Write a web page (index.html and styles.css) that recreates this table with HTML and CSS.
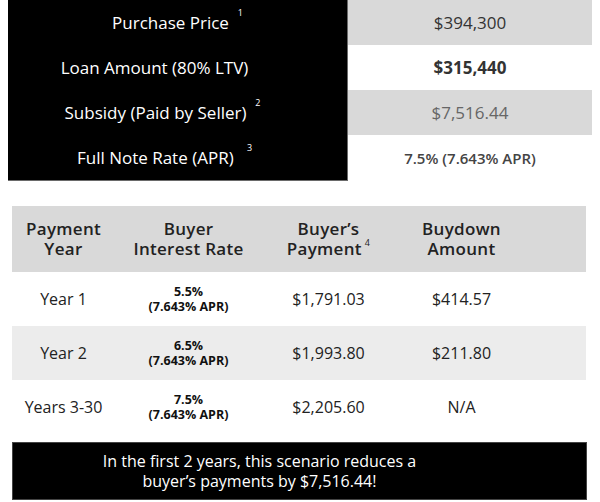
FILE: index.html
```html
<!DOCTYPE html>
<html>
<head>
<meta charset="utf-8">
<link rel="stylesheet" href="styles.css">
</head>
<body>
<div class="summary">
  <div class="label label--first"><span>Purchase Price &nbsp;<sup>1</sup></span></div>
  <div class="value value--gray">$394,300</div>
  <div class="label"><span>Loan Amount (80% LTV)</span></div>
  <div class="value value--bold">$315,440</div>
  <div class="label label--subsidy"><span>Subsidy (Paid by Seller) &nbsp;<sup>2</sup></span></div>
  <div class="value value--gray value--muted">$7,516.44</div>
  <div class="label label--last"><span>Full Note Rate (APR) &nbsp;&nbsp;<sup>3</sup></span></div>
  <div class="value value--semi">7.5% (7.643% APR)</div>
</div>

<div class="schedule">
  <div class="row row--head">
    <div class="cell">Payment<br>Year</div>
    <div class="cell">Buyer<br>Interest Rate</div>
    <div class="cell">Buyer’s<br>Payment<sup>4</sup></div>
    <div class="cell">Buydown<br>Amount</div>
  </div>
  <div class="row">
    <div class="cell">Year 1</div>
    <div class="cell rate">5.5%<br>(7.643% APR)</div>
    <div class="cell">$1,791.03</div>
    <div class="cell">$414.57</div>
  </div>
  <div class="row row--alt">
    <div class="cell">Year 2</div>
    <div class="cell rate">6.5%<br>(7.643% APR)</div>
    <div class="cell">$1,993.80</div>
    <div class="cell">$211.80</div>
  </div>
  <div class="row">
    <div class="cell">Years 3-30</div>
    <div class="cell rate">7.5%<br>(7.643% APR)</div>
    <div class="cell">$2,205.60</div>
    <div class="cell">N/A</div>
  </div>
</div>

<div class="banner">
  <p>In the first 2 years, this scenario reduces a<br>buyer’s payments by $7,516.44!</p>
</div>
</body>
</html>
```

FILE: styles.css
```css
* { box-sizing: border-box; }
body {
  margin: 0;
  background: #fff;
  font-family: "Open Sans", "DejaVu Sans", sans-serif;
  color: #222;
  width: 600px;
  height: 502px;
  overflow: hidden;
}
sup {
  font-size: 9px;
  line-height: 0;
  vertical-align: top;
  position: relative;
  top: 2px;
}

.summary {
  display: grid;
  grid-template-columns: 340px 244px;
  grid-auto-rows: 45px;
  margin-left: 8px;
}
.label {
  background: #000;
  color: #fff;
  font-size: 17px;
  display: flex;
  align-items: center;
  justify-content: center;
  padding-right: 46px;
  border-right: 1px solid #6a6a6a;
}
.label--first { padding-left: 0; padding-right: 0; }
.label--subsidy { padding-right: 30px; }
.label--last { border-bottom: 1px solid #6a6a6a; height: 46px; padding-right: 26px; }
.value {
  display: flex;
  align-items: center;
  justify-content: center;
  font-size: 17px;
  color: #333;
}
.value--gray { background: #d9d9d9; }
.value--bold { font-weight: 700; }
.value--muted { color: #666; }
.value--semi { font-weight: 600; font-size: 15px; color: #444; }

.schedule {
  margin: 26px 14px 0 12px;
}
.row {
  display: grid;
  grid-template-columns: 103px 147px 133px 133px;
  height: 54px;
  align-items: center;
  text-align: center;
  font-size: 16px;
}
.row--head {
  background: #d9d9d9;
  height: 66px;
  font-weight: 600;
  font-size: 17px;
  line-height: 20px;
  letter-spacing: 0.3px;
}
.row--head sup { top: 4px; margin-left: 3px; font-weight: 400; }
.row--alt { background: #ececec; }
.rate {
  font-weight: 700;
  font-size: 12.5px;
  line-height: 15px;
  color: #111;
}

.banner {
  margin: 8px 13px 0 12px;
  height: 58px;
  background: #000;
  border: 1px solid #444;
  color: #fff;
  display: flex;
  align-items: center;
  justify-content: center;
  padding-right: 80px;
}
.banner p {
  margin: 0;
  text-align: center;
  font-size: 16px;
  line-height: 20px;
}
```
